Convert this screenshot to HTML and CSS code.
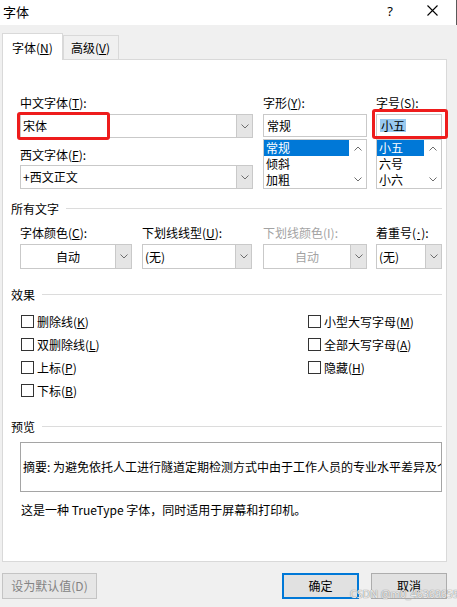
FILE: index.html
```html
<!DOCTYPE html>
<html lang="zh-CN">
<head>
<meta charset="utf-8">
<title>字体</title>
<link rel="stylesheet" href="styles.css">
</head>
<body>
<div class="window">
  <div class="titlebar">
    <span class="title">字体</span>
    <span class="help">?</span>
    <span class="close">
      <svg width="11" height="11" viewBox="0 0 11 11"><path d="M0.5 0.5 L10.5 10.5 M10.5 0.5 L0.5 10.5" stroke="#000" stroke-width="1.1" fill="none"/></svg>
    </span>
  </div>

  <div class="tabs">
    <div class="tab active">字体(<u>N</u>)</div>
    <div class="tab">高级(<u>V</u>)</div>
  </div>

  <div class="panel">
    <div class="font-row">
      <div class="col col-font">
        <div class="label">中文字体(<u>T</u>):</div>
        <div class="combo"><span class="combo-text">宋体</span><span class="drop"><svg width="8" height="5" viewBox="0 0 8 5"><path d="M0.5 0.5 L4 4 L7.5 0.5" stroke="#6d6d6d" fill="none"/></svg></span></div>
        <div class="label label-second">西文字体(<u>F</u>):</div>
        <div class="combo combo-second"><span class="combo-text">+西文正文</span><span class="drop"><svg width="8" height="5" viewBox="0 0 8 5"><path d="M0.5 0.5 L4 4 L7.5 0.5" stroke="#6d6d6d" fill="none"/></svg></span></div>
      </div>
      <div class="col col-style">
        <div class="label">字形(<u>Y</u>):</div>
        <div class="textbox">常规</div>
        <div class="listbox">
          <ul class="items">
            <li class="sel">常规</li>
            <li>倾斜</li>
            <li>加粗</li>
          </ul>
          <div class="vscroll">
            <svg width="8" height="5" viewBox="0 0 8 5"><path d="M0.5 4.5 L4 1 L7.5 4.5" stroke="#6d6d6d" fill="none"/></svg>
            <svg width="8" height="5" viewBox="0 0 8 5"><path d="M0.5 0.5 L4 4 L7.5 0.5" stroke="#6d6d6d" fill="none"/></svg>
          </div>
        </div>
      </div>
      <div class="col col-size">
        <div class="label">字号(<u>S</u>):</div>
        <div class="textbox"><span class="selected-text">小五</span></div>
        <div class="listbox">
          <ul class="items">
            <li class="sel">小五</li>
            <li>六号</li>
            <li>小六</li>
          </ul>
          <div class="vscroll">
            <svg width="8" height="5" viewBox="0 0 8 5"><path d="M0.5 4.5 L4 1 L7.5 4.5" stroke="#6d6d6d" fill="none"/></svg>
            <svg width="8" height="5" viewBox="0 0 8 5"><path d="M0.5 0.5 L4 4 L7.5 0.5" stroke="#6d6d6d" fill="none"/></svg>
          </div>
        </div>
      </div>
    </div>

    <div class="group-head head-all"><span>所有文字</span><i class="rule"></i></div>
    <div class="all-row">
      <div class="field f-color">
        <div class="label">字体颜色(<u>C</u>):</div>
        <div class="combo combo-tall"><span class="combo-text center">自动</span><span class="drop"><svg width="8" height="5" viewBox="0 0 8 5"><path d="M0.5 0.5 L4 4 L7.5 0.5" stroke="#6d6d6d" fill="none"/></svg></span></div>
      </div>
      <div class="field f-uline">
        <div class="label">下划线线型(<u>U</u>):</div>
        <div class="combo combo-tall"><span class="combo-text">(无)</span><span class="drop"><svg width="8" height="5" viewBox="0 0 8 5"><path d="M0.5 0.5 L4 4 L7.5 0.5" stroke="#6d6d6d" fill="none"/></svg></span></div>
      </div>
      <div class="field f-ucolor">
        <div class="label disabled">下划线颜色(I):</div>
        <div class="combo combo-tall"><span class="combo-text center disabled">自动</span><span class="drop"><svg width="8" height="5" viewBox="0 0 8 5"><path d="M0.5 0.5 L4 4 L7.5 0.5" stroke="#6d6d6d" fill="none"/></svg></span></div>
      </div>
      <div class="field f-emph">
        <div class="label">着重号(<u class="dot">·</u>):</div>
        <div class="combo combo-tall"><span class="combo-text">(无)</span><span class="drop"><svg width="8" height="5" viewBox="0 0 8 5"><path d="M0.5 0.5 L4 4 L7.5 0.5" stroke="#6d6d6d" fill="none"/></svg></span></div>
      </div>
    </div>

    <div class="group-head head-effects"><span>效果</span><i class="rule"></i></div>
    <div class="effects">
      <label class="check"><span class="box"></span>删除线(<u>K</u>)</label>
      <label class="check"><span class="box"></span>小型大写字母(<u>M</u>)</label>
      <label class="check"><span class="box"></span>双删除线(<u>L</u>)</label>
      <label class="check"><span class="box"></span>全部大写字母(<u>A</u>)</label>
      <label class="check"><span class="box"></span>上标(<u>P</u>)</label>
      <label class="check"><span class="box"></span>隐藏(<u>H</u>)</label>
      <label class="check"><span class="box"></span>下标(<u>B</u>)</label>
    </div>

    <div class="group-head head-preview"><span>预览</span><i class="rule"></i></div>
    <div class="preview"><span class="preview-text">摘要: 为避免依托人工进行隧道定期检测方式中由于工作人员的专业水平差异及个人主观因素</span></div>
    <div class="note">这是一种 TrueType 字体，同时适用于屏幕和打印机。</div>
  </div>

  <div class="buttons">
    <div class="btn btn-disabled">设为默认值(D)</div>
    <div class="btn btn-ok">确定</div>
    <div class="btn btn-cancel">取消</div>
  </div>

  <div class="mark mark-cn"></div>
  <div class="mark mark-size"></div>
  <div class="watermark">CSDN @m0_46369659</div>
</div>
</body>
</html>
```

FILE: styles.css
```css
* { box-sizing: border-box; }

html, body {
  margin: 0;
  padding: 0;
}

body {
  width: 457px;
  height: 607px;
  overflow: hidden;
  background: #f0f0f0;
  font-family: "Noto Sans CJK SC", "Noto Sans", sans-serif;
  font-size: 12px;
  line-height: 16px;
  color: #000;
}

u { text-decoration: underline; text-underline-offset: 1px; }
u.dot { font-family: "Noto Sans", sans-serif; padding: 0 1px; }

.window {
  position: relative;
  width: 457px;
  height: 607px;
}

/* title bar */
.titlebar {
  height: 25px;
  background: #fff;
  display: flex;
  align-items: center;
  padding-left: 3px;
  border-right: 1px solid #5a5a5a;
}
.title {
  font-size: 13px;
  line-height: 18px;
  margin-top: -1px;
}
.help {
  margin-left: auto;
  font-family: "Noto Sans", sans-serif;
  font-size: 13px;
  line-height: 18px;
  margin-top: -3px;
}
.close {
  display: flex;
  margin-left: 34px;
  margin-right: 18px;
  margin-top: -4px;
}

/* tabs */
.tabs {
  height: 34px;
  display: flex;
  align-items: flex-end;
  padding-left: 2px;
  position: relative;
  z-index: 1;
}
.tab {
  height: 24px;
  width: 56px;
  border: 1px solid #d9d9d9;
  border-bottom: none;
  background: #f0f0f0;
  padding: 4px 0 0 7px;
  white-space: nowrap;
}
.tab.active {
  width: 61px;
  height: 27px;
  margin-bottom: -1px;
  background: #fff;
  padding: 6px 0 0 9px;
}

/* panel */
.panel {
  margin-left: 2px;
  width: 445px;
  height: 503px;
  background: #fff;
  border: 1px solid #d9d9d9;
  padding: 35px 4px 0 8px;
}

.label { height: 16px; white-space: nowrap; }
.label.disabled, .disabled { color: #a3a3a3; }

.font-row {
  display: flex;
  margin-left: 9px;
  height: 94px;
}
.col-font { width: 233px; }
.col-style { width: 104px; margin-left: 10px; }
.col-size { width: 66px; margin-left: 9px; }

.combo {
  margin-top: 3px;
  height: 24px;
  border: 1px solid #c9c9c9;
  display: flex;
  background: #fff;
}
.combo-second { margin-top: 2px; }
.combo-tall { height: 25px; }
.label-second { margin-top: 9px; }
.combo-text {
  flex: 1;
  padding-left: 2px;
  display: flex;
  align-items: center;
  white-space: nowrap;
  overflow: hidden;
}
.combo-text.center { justify-content: center; padding-left: 0; }
.drop {
  width: 16px;
  background: #e5e5e5;
  border-left: 1px solid #c9c9c9;
  display: flex;
  align-items: center;
  justify-content: center;
}

.textbox {
  margin-top: 3px;
  height: 23px;
  border: 1px solid #c9c9c9;
  padding-left: 3px;
  display: flex;
  align-items: center;
  white-space: nowrap;
}
.selected-text {
  background: #99c9ef;
  line-height: 13px;
  height: 13px;
  padding: 0 1px;
}

.listbox {
  margin-top: 2px;
  height: 50px;
  border: 1px solid #c9c9c9;
  display: flex;
}
.items {
  list-style: none;
  margin: 0;
  padding: 0;
  flex: 1;
}
.items li {
  height: 16px;
  padding-left: 2px;
  white-space: nowrap;
}
.items li.sel {
  background: #0078d7;
  color: #fff;
}
.vscroll {
  width: 17px;
  display: flex;
  flex-direction: column;
  align-items: center;
  justify-content: space-between;
  padding: 6px 0 6px;
}

/* group headings */
.group-head {
  display: flex;
  align-items: center;
  height: 16px;
}
.group-head .rule {
  flex: 1;
  height: 1px;
  background: #dcdcdc;
  margin-left: 7px;
  margin-top: -1px;
}
.head-all { margin-top: 12px; }
.head-effects { margin-top: 18px; }
.head-preview { margin-top: 17px; }

.all-row {
  display: flex;
  margin-left: 9px;
  margin-top: 8px;
}
.f-color { width: 112px; }
.f-uline { width: 110px; margin-left: 10px; }
.f-ucolor { width: 104px; margin-left: 11px; }
.f-emph { width: 66px; margin-left: 9px; }

/* effects */
.effects {
  margin-top: 7px;
  margin-left: 10px;
  display: grid;
  grid-template-columns: 287px 1fr;
  grid-auto-rows: 23px;
}
.check {
  display: flex;
  align-items: center;
  white-space: nowrap;
}
.check .box {
  width: 13px;
  height: 13px;
  border: 1px solid #333;
  background: #fff;
  margin-right: 3px;
}

/* preview */
.preview {
  margin-top: 7px;
  margin-left: 9px;
  width: 422px;
  height: 50px;
  border: 1px solid #a5a5a5;
  overflow: hidden;
  display: flex;
  align-items: center;
  padding-left: 2px;
  white-space: nowrap;
}
.note {
  margin-top: 10px;
  margin-left: 10px;
}

/* buttons */
.buttons {
  display: flex;
  margin-top: 11px;
  padding-left: 2px;
  padding-right: 10px;
}
.btn {
  height: 26px;
  display: flex;
  align-items: center;
  justify-content: center;
  background: #e1e1e1;
  border: 1px solid #adadad;
}
.btn-disabled {
  width: 95px;
  color: #838383;
  background: #e6e6e6;
  border-color: #c4c4c4;
}
.btn-ok {
  width: 77px;
  margin-left: auto;
  border-color: #0078d7;
  box-shadow: inset 0 0 0 1px #0078d7;
}
.btn-cancel {
  width: 76px;
  margin-left: 12px;
}

/* annotation overlays */
.mark {
  position: absolute;
  border: 3px solid #ee1c1c;
  border-radius: 3px;
}
.mark-cn { left: 17px; top: 112px; width: 93px; height: 28px; }
.mark-size { left: 372px; top: 109px; width: 76px; height: 30px; }

.watermark {
  position: absolute;
  left: 350px;
  top: 587px;
  font-family: "Noto Sans", sans-serif;
  font-size: 10.5px;
  line-height: 14px;
  color: rgba(255, 255, 255, 0.85);
  text-shadow: 0 0 1px #8a8a8a, 0 0 1px #8a8a8a;
  white-space: nowrap;
}
```
